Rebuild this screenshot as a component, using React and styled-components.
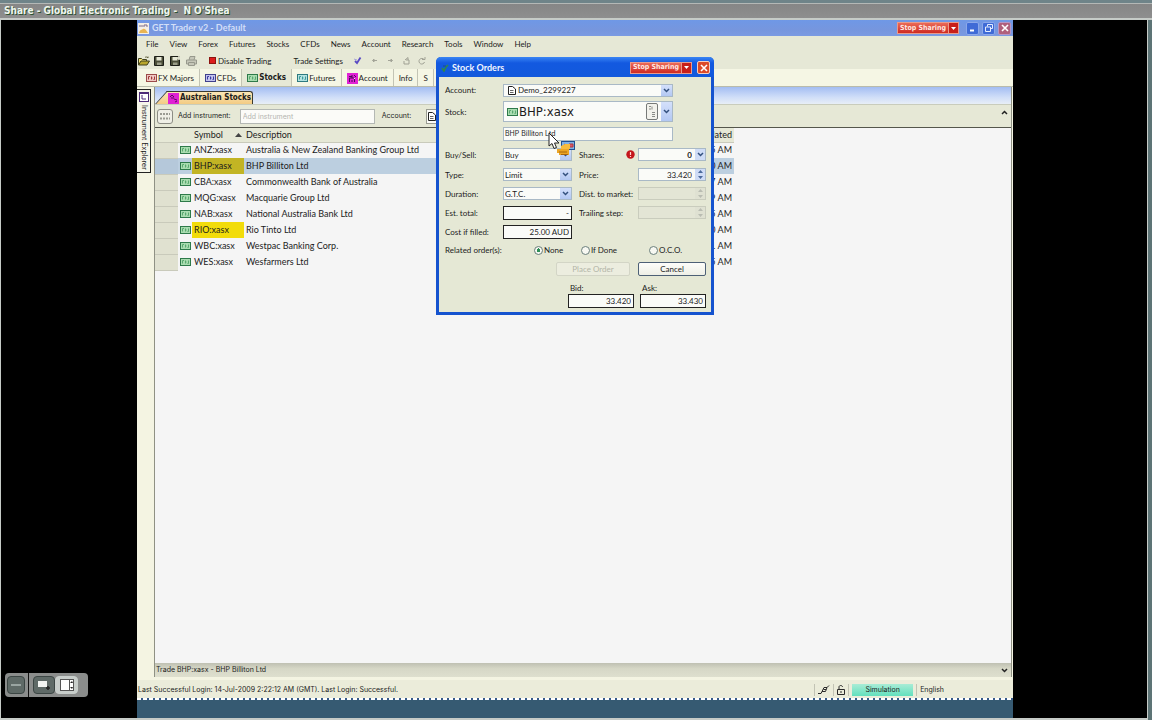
import React from 'react';
import styled, { createGlobalStyle, css } from 'styled-components';

const ui = '"Lato", "Liberation Sans", sans-serif';
const small = '"Inter", "Liberation Sans", sans-serif';
const strong = '"DejaVu Sans Condensed", "Liberation Sans", sans-serif';

const Global = createGlobalStyle`
  *, *::before, *::after { box-sizing: border-box; }
  body { margin: 0; background: #000; color: #1c1c1c; font: 8px/10px ${ui}; }
  button, input, select { font: inherit; color: inherit; margin: 0; padding: 0; border: 0; background: none; border-radius: 0; min-width: 0; }
  select { appearance: none; }
  svg { display: block; flex: none; }
`;

/* ---------- meeting frame ---------- */
const Frame = styled.div`
  position: relative;
  min-height: 100vh;
  display: flex;
  flex-direction: column;
  background: #5d7476;
`;
const FrameTitle = styled.header`
  height: 20px;
  padding-left: 4px;
  border-top: 3px solid #6f8489;
  border-bottom: 2px solid #c6cbc7;
  background: linear-gradient(#b4b8b6 0 1px, #868686 1px, #8e8e8e);
  color: #eef6ee;
  font: bold 10px/15px ${strong};
  text-shadow: 1px 1px 0 #2c5233;
  white-space: pre;
`;
const Stage = styled.div`
  flex: 1;
  display: grid;
  grid-template-columns: 136px minmax(0, 1fr) 134px;
  margin-right: 4px;
  border: solid #c6cbc7;
  border-width: 0 1px 2px 1px;
  background: #000;
`;
const Desktop = styled.div`
  grid-column: 2;
  position: relative;
  display: flex;
  flex-direction: column;
  background: #365a72;
`;
const Taskbar = styled.div`
  height: 20px;
  background:
    repeating-linear-gradient(90deg, #fff 0 4px, #365a8a 4px 6px) top / 100% 2px no-repeat,
    #365a72;
`;
const FloatBar = styled.div`
  position: absolute;
  left: 5px;
  bottom: 23px;
  height: 24px;
  width: 83px;
  display: flex;
  border-radius: 4px;
  background: #8b8d8c;
`;
const FloatButton = styled.button`
  display: grid;
  place-items: center;
  width: ${p => p.$w}px;
  margin: 3px ${p => p.$gap || 0}px 3px ${p => p.$lead || 0}px;
  border: 1px solid ${p => (p.$on ? '#c8cecb' : '#3c4644')};
  border-radius: 4px;
  background: ${p => (p.$on ? '#c8cecb' : '#5f6a67')};
`;
const FloatRule = styled.i`
  width: 1px;
  background: #111;
`;

/* ---------- application window ---------- */
const Window = styled.section`
  flex: 1;
  display: flex;
  flex-direction: column;
  background: #f4f4e2;
`;
const TitleBar = styled.header`
  height: 16px;
  display: flex;
  align-items: center;
  gap: 3px;
  padding: 0 2px 0 1px;
  background: linear-gradient(#6f98e6, #7696de 60%, #7b9ae2);
  color: #d3dff8;
  font: bold 9px/12px ${ui};
`;
const Grow = styled.span`
  flex: 1;
`;
const StopGroup = styled.div`
  display: flex;
  height: 12px;
  margin-right: ${p => p.$after}px;
  border: 1px solid #e89a8c;
  background: linear-gradient(#ea6a58, #cf2a22);
`;
const StopButton = styled.button`
  padding: 0 2px;
  color: #ffe9e2;
  font: bold 7px/9px ${strong};
`;
const StopMenu = styled.button`
  width: 10px;
  display: grid;
  place-items: center;
  border-left: 1px solid #e89a8c;
  background: #c81f1a;
`;
const WinButton = styled.button`
  width: 13px;
  height: 13px;
  display: grid;
  place-items: center;
  border-radius: 2px;
  border: 1px solid ${p => p.$edge || '#8ba8ea'};
  background: ${p => p.$fill || '#3f6bd6'};
`;
const MenuBar = styled.nav`
  height: 16px;
  display: flex;
  align-items: center;
  gap: 11px;
  padding-left: 9px;
  background: #e6e8d6;
`;
const MenuItem = styled.button`
  height: 12px;
`;
const ToolBar = styled.div`
  height: 17px;
  display: flex;
  align-items: center;
  padding-left: 1px;
  background: #e6e8d6;
`;
const ToolButton = styled.button`
  display: flex;
  align-items: center;
  gap: 2px;
  margin-right: ${p => p.$after}px;
`;
const TabBar = styled.nav`
  height: 18px;
  display: flex;
  padding-left: 4px;
  border-bottom: 1px solid #b9bbab;
  background: #f5f6e4;
`;
const Tab = styled.button`
  display: flex;
  align-items: center;
  gap: 1px;
  padding: 1px 5px 0;
  border-right: 1px solid #c3c4b4;
  white-space: nowrap;
  ${p => p.$active && css`
    background: #e6e8d6;
    font: bold 8px/10px ${strong};
  `}
`;
const Work = styled.div`
  flex: 1;
  display: flex;
  padding-right: 1px;
`;
const Rail = styled.aside`
  width: 17px;
  padding-top: 2px;
`;
const RailTab = styled.button`
  width: 14px;
  height: 84px;
  display: flex;
  flex-direction: column;
  align-items: center;
  gap: 3px;
  padding-top: 2px;
  border: 1px solid #222;
  border-left: 0;
  background: #f6f6ea;
`;
const RailText = styled.span`
  writing-mode: vertical-rl;
  white-space: nowrap;
  font: 7px/10px ${small};
`;
const Panel = styled.main`
  flex: 1;
  min-width: 0;
  display: flex;
  flex-direction: column;
  margin-bottom: 3px;
  border: solid #8f9184;
  border-width: 0 1px;
  background: #f5f5f5;
`;
const PanelTabs = styled.div`
  height: 18px;
  display: flex;
  align-items: flex-end;
  padding-left: 13px;
  border-bottom: 1px solid #c9ccbc;
  background: linear-gradient(#a3bdf2, #d0def8 60%, #e8eef6);
`;
const PanelTab = styled.button`
  position: relative;
  z-index: 0;
  height: 13px;
  display: flex;
  align-items: center;
  gap: 1px;
  padding-right: 1px;
  border: solid #3a3a30;
  border-width: 1px 1px 0 0;
  border-radius: 0 3px 0 0;
  background: linear-gradient(#fbe6b6, #f3cb84);
  font: bold 8px/10px ${strong};
  &::before {
    content: '';
    position: absolute;
    z-index: -1;
    left: -7px;
    top: -1px;
    width: 14px;
    height: 13px;
    border: solid #3a3a30;
    border-width: 1px 0 0 1px;
    background: linear-gradient(#fbe6b6, #f3cb84);
    transform: skewX(-42deg);
  }
`;
const Filter = styled.div`
  height: 23px;
  display: flex;
  align-items: center;
  padding: 0 3px 0 2px;
  border-bottom: 1px solid #55564c;
  background: #e6e8d6;
  font: 7px/10px ${small};
`;
const GridButton = styled.button`
  width: 16px;
  height: 15px;
  margin-right: 5px;
  display: grid;
  place-items: center;
  border: 1px solid #8c8d84;
  border-radius: 3px;
  background: #efefe6;
`;
const FilterInput = styled.input`
  width: 135px;
  height: 15px;
  margin: 0 7px 0 9px;
  padding: 0 2px;
  border: 1px solid #b4b8b4;
  background: #fbfbf8;
  &::placeholder { color: #b4b5b0; opacity: 1; }
`;
const FilterSelect = styled.div`
  width: 120px;
  height: 15px;
  margin-left: 15px;
  padding-left: 1px;
  display: flex;
  align-items: center;
  border: 1px solid #9a9c92;
  background: #fbfbf8;
`;
const FlatButton = styled.button`
  display: grid;
  place-items: center;
  height: 14px;
  align-self: flex-start;
`;

const Sheet = styled.table`
  width: 579px;
  table-layout: fixed;
  border-collapse: collapse;
  font: 9px/12px ${ui};
`;
const HeadCell = styled.th`
  width: ${p => p.$w}px;
  height: 14px;
  padding: 1px 2px 0;
  border-bottom: 1px solid #c9cabb;
  background: #e6e8d6;
  font-weight: normal;
  text-align: ${p => p.$align || 'left'};
  white-space: nowrap;
`;
const SortLabel = styled.span`
  display: flex;
  align-items: center;
  justify-content: space-between;
`;
const Row = styled.tr`
  height: 16px;
  background: ${p => (p.$selected ? '#bccfe0' : 'transparent')};
`;
const Handle = styled.td`
  padding: 0;
  border-bottom: 1px solid #c9cabb;
  background: ${p => (p.$selected ? '#b5c8da' : '#e0e1d0')};
`;
const Cell = styled.td`
  padding: 0 2px;
  background: ${p => p.$fill || 'transparent'};
  text-align: ${p => p.$align || 'left'};
  white-space: nowrap;
`;
const InfoBar = styled.div`
  height: 14px;
  display: flex;
  align-items: center;
  justify-content: space-between;
  margin-top: auto;
  padding: 0 3px 0 1px;
  background: linear-gradient(#bfc0b2, #d6d7c6 40%, #dedfce);
  font: 7px/10px ${small};
`;
const StatusBar = styled.footer`
  height: 18px;
  display: flex;
  align-items: center;
  padding: 1px 66px 0 1px;
  background: #ebecda;
  font: 7px/10px ${small};
`;
const StatusCell = styled.span`
  height: 12px;
  display: flex;
  align-items: center;
  padding: 0 3px;
  border-left: 1px solid #c2c3b4;
`;
const Mode = styled.span`
  width: 61px;
  padding: 1px 0;
  text-align: center;
  background: linear-gradient(#a9ecd6, #62e0bd);
`;

/* ---------- order dialog ---------- */
const Dialog = styled.form`
  position: absolute;
  left: 299px;
  top: 37px;
  width: 278px;
  border: 3px solid #1553cf;
  border-top: 0;
  border-radius: 5px 5px 0 0;
  background: #e5e8d5;
`;
const DialogTitle = styled.header`
  height: 20px;
  display: flex;
  align-items: center;
  gap: 3px;
  margin: 0 -3px;
  padding: 1px 4px 0 5px;
  border-radius: 5px 5px 0 0;
  background: linear-gradient(#3a86f4, #1359e0 30%, #1259dc);
  color: #f2f6ff;
  font: bold 9px/12px ${ui};
`;
const DialogBody = styled.div`
  display: flex;
  flex-direction: column;
  padding: 3px 5px 4px 6px;
`;
const FormRow = styled.div`
  display: grid;
  grid-template-columns: 58px 76px 59px 68px;
  align-items: center;
  height: ${p => p.$h || 19}px;
`;
const Label = styled.label`
  display: flex;
  align-items: center;
  justify-content: space-between;
  padding-right: 3px;
  white-space: nowrap;
`;
const Box = styled.div`
  width: ${p => p.$w || 69}px;
  height: ${p => p.$h || 13}px;
  display: flex;
  align-items: center;
  gap: 1px;
  padding-left: ${p => p.$pad || 0}px;
  border: 1px solid ${p => p.$edge || '#a9b9c6'};
  background: ${p => p.$fill || '#fafbf8'};
`;
const Text = styled.input`
  flex: 1;
  align-self: stretch;
  width: 100%;
  padding: 0 2px 0 1px;
  text-align: ${p => p.$align || 'left'};
  ${p => p.$bold && css`font-weight: bold;`}
  ${p => p.$compact && css`font: 7px/10px ${small};`}
  ${p => p.$big && css`font: 13px/18px ${strong}; padding-left: 0;`}
`;
const Choice = styled.select`
  flex: 1;
  align-self: stretch;
  width: 100%;
  padding-left: 1px;
`;
const Drop = styled.span`
  align-self: stretch;
  width: 11px;
  display: grid;
  place-items: center;
  background: linear-gradient(#d4e0fb, #b3c8f3);
  pointer-events: none;
`;
const Spin = styled.span`
  align-self: stretch;
  width: 10px;
  display: grid;
  place-items: center;
  background: ${p => (p.$off ? '#dfe1d2' : '#cfdcf6')};
`;
const SideButton = styled.button`
  width: 12px;
  height: 17px;
  display: grid;
  place-items: center;
  margin-right: 2px;
  border: 1px solid #777a78;
  border-radius: 2px;
  background: #f2f2ec;
`;
const Radios = styled.div`
  display: grid;
  grid-template-columns: 89px 47px 68px 1fr;
  align-items: center;
  height: 18px;
`;
const RadioLabel = styled.label`
  display: flex;
  align-items: center;
  gap: 1px;
  white-space: nowrap;
`;
const Radio = styled.input`
  appearance: none;
  width: 9px;
  height: 9px;
  flex: none;
  border: 1px solid #6b7f7c;
  border-radius: 50%;
  background: #f7f8f2;
  &:checked { background: radial-gradient(circle, #2f8f57 0 2px, #f7f8f2 2px); }
`;
const Actions = styled.div`
  display: flex;
  justify-content: flex-end;
  align-items: center;
  gap: 8px;
  height: 19px;
`;
const Action = styled.button`
  width: ${p => p.$w}px;
  height: 14px;
  border: 1px solid #4d6076;
  border-radius: 2px;
  background: linear-gradient(#fdfdfa, #eeefe6);
  &:disabled { border-color: #d3d5c6; background: #eceddf; color: #b3b5a8; }
`;
const Quotes = styled.div`
  display: flex;
  justify-content: flex-end;
  gap: 6px;
  padding-top: 5px;
`;
const Quote = styled.label`
  display: flex;
  flex-direction: column;
  gap: 1px;
`;
const QuoteName = styled.span`
  padding-left: 2px;
`;
const Pointer = styled.div`
  position: absolute;
  left: 108px;
  top: 75px;
  pointer-events: none;
`;

/* ---------- drawings ---------- */
const Chevron = ({ up, color = '#33507e' }) => (
  <svg width="7" height="5" viewBox="0 0 7 5" fill="none" stroke={color} strokeWidth="1.5">
    <path d={up ? 'M1 4L3.500 1.500L6 4' : 'M1 1L3.500 3.500L6 1'} />
  </svg>
);
const Caret = ({ color = '#fff' }) => (
  <svg width="5" height="3" viewBox="0 0 5 3" fill={color}><path d="M0 0h5L2.500 3z" /></svg>
);
const SpinMarks = ({ color = '#4c6a9c' }) => (
  <svg width="5" height="9" viewBox="0 0 5 9" fill={color}><path d="M0 3L2.500 0L5 3zM0 6h5L2.500 9z" /></svg>
);
const Note = ({ line = '#2e7a4a', fill = '#a9dcb0', mark = '#5aa870' }) => (
  <svg width="11" height="8" viewBox="0 0 11 8">
    <rect x=".5" y=".5" width="10" height="7" fill={fill} stroke={line} />
    <path d="M2.500 2.500v3M2.500 2.500h1.500M5.500 2.500v3M5.500 4h1M8.500 2.500v3M7.500 5.500h1" stroke={mark} fill="none" />
  </svg>
);
const Doc = () => (
  <svg width="8" height="9" viewBox="0 0 8 9" fill="#fff" stroke="#222">
    <path d="M.5.5h4l3 2.500v5.500h-7z" /><path d="M2 4.500h3.500M2 6.500h3.500" strokeWidth=".7" />
  </svg>
);
const Magenta = () => (
  <svg width="11" height="11" viewBox="0 0 11 11">
    <rect width="11" height="11" fill="#e021d4" />
    <path d="M2 4l2-2 2 2M3 5h3M6 6l3 1M7 9l2-1" stroke="#5c1060" fill="none" />
  </svg>
);
const Cart = () => (
  <svg width="11" height="11" viewBox="0 0 11 11">
    <rect width="11" height="11" fill="#e021d4" />
    <path d="M2.500 9V5h5v4M5 2v3M2 3.500h3M7 2l2 2M5 9V7" stroke="#4a0c58" fill="none" /><path d="M7 5h1v1h-1z" fill="#ffd9f8" />
  </svg>
);
const AppMark = () => (
  <svg width="11" height="11" viewBox="0 0 11 11">
    <rect width="11" height="11" fill="#f3efe6" /><path d="M1 3h6M6 2h3v2" stroke="#7a6a8c" fill="none" />
    <path d="M1 10c1-4 3-3 4-4s3 0 5 4z" fill="#e9b552" />
  </svg>
);
const Folder = () => (
  <svg width="12" height="10" viewBox="0 0 12 10">
    <path d="M.5 9V2.500h3l1 1h4V5" fill="#f4e27a" stroke="#40401c" /><path d="M.5 9L3 5h8.500L9 9z" fill="#b9a62c" stroke="#40401c" />
    <path d="M7 1.500c1-1 2-.5 3 .5V.5" fill="none" stroke="#40401c" strokeWidth=".8" />
  </svg>
);
const Floppy = ({ star }) => (
  <svg width="11" height="10" viewBox="0 0 11 10">
    <path d="M.5.5h9v9h-9z" fill="#4a4d38" stroke="#1c1e18" /><path d="M2.500 1h5v3.500h-5z" fill="#e6e8d6" /><path d="M3 6.500h4.500V9H3z" fill="#9a9d88" />
    {star && <path d="M7 2h4M9 0v4" stroke="#e6e8d6" strokeWidth="1.500" />}
  </svg>
);
const Printer = () => (
  <svg width="11" height="10" viewBox="0 0 11 10" fill="#c5c6b8" stroke="#97988c">
    <path d="M3 4L4 .5h5L8 4" /><path d="M.5 4h10v4h-10z" /><path d="M2.500 6.500h6v3h-6z" />
  </svg>
);
const RedStop = () => <svg width="7" height="7"><rect width="7" height="7" fill="#8c1410" /><rect x="1" y="1" width="5" height="5" fill="#dc1c1c" /></svg>;
const Tick = () => (
  <svg width="9" height="9" viewBox="0 0 9 9" fill="none"><path d="M2 5l2 2L7.500 1.500" stroke="#5a4bc4" strokeWidth="1.800" /><path d="M1 3l3 1" stroke="#a8a4d8" /></svg>
);
const Arrow = ({ right }) => (
  <svg width="7" height="7" viewBox="0 0 7 7" fill="#a3a498" stroke="#a3a498">
    <path d={right ? 'M1 3.500h4M4 2L5.500 3.500 4 5z' : 'M6 3.500H2M3 2L1.500 3.500 3 5z'} />
  </svg>
);
const Refresh = ({ home }) => (
  <svg width="8" height="8" viewBox="0 0 8 8" fill="none" stroke="#a0a194">
    <path d={home ? 'M1 4v3h5V3H3M2 3L5 .5V3' : 'M6 2.500A2.800 2.800 0 1 0 6.500 5M4 2.500h3V0'} />
  </svg>
);
const RailIcon = () => (
  <svg width="10" height="10" viewBox="0 0 10 10"><rect x=".5" y=".5" width="9" height="9" fill="#fff" stroke="#4d2a78" /><path d="M0 1h10" stroke="#4d2a78" strokeWidth="2" /><path d="M3 3v4h4" stroke="#4d2a78" fill="none" /></svg>
);
const GridMark = () => (
  <svg width="10" height="9" viewBox="0 0 10 9" stroke="#9a9b92" strokeWidth="2" strokeDasharray="2 1"><path d="M0 2h10M0 6.500h10" /></svg>
);
const Cross = () => <svg width="8" height="8" viewBox="0 0 8 8" stroke="#fff" strokeWidth="1.600"><path d="M1 1l6 6M7 1L1 7" /></svg>;
const MinMark = () => <svg width="8" height="8" viewBox="0 0 8 8"><path d="M1 6.500h4" stroke="#fff" strokeWidth="2" /></svg>;
const RestoreMark = () => (
  <svg width="8" height="8" viewBox="0 0 8 8" fill="none" stroke="#e4ecff"><path d="M2.500 2.500v-2h5v4h-2" /><path d="M.5 3h5v4.500h-5z" /></svg>
);
const Plug = () => (
  <svg width="12" height="9" viewBox="0 0 12 9" fill="none" stroke="#2a2a2a"><path d="M0 8.500h3l1-2M4 6.500L6 2.500h3L7.500 6.500zM9 2.500l2-2M5.500 4.500h2.500" /></svg>
);
const Lock = () => (
  <svg width="8" height="10" viewBox="0 0 8 10" fill="none" stroke="#2a2a2a"><path d="M.5 4.500h7v5h-7z" /><path d="M2 4.500V2C2 0 5.500 0 5.500 2M4 6v2" /></svg>
);
const Alert = () => (
  <svg width="9" height="9" viewBox="0 0 9 9"><circle cx="4.500" cy="4.500" r="4.200" fill="#c4161c" /><path d="M4.500 2v3M4.500 6v1" stroke="#ffd9d2" strokeWidth="1.200" /></svg>
);
const DialogMark = () => (
  <svg width="8" height="8" viewBox="0 0 8 8" fill="none"><path d="M1 4l2 3 2-4 2-2" stroke="#2f8a4a" strokeWidth="1.600" /><path d="M2 2h3" stroke="#1d4c8c" /></svg>
);
const SideMark = () => (
  <svg width="6" height="13" viewBox="0 0 6 13" fill="none" stroke="#8a8c88"><path d="M0 1.500h2M0 4h2M3 1.500v3M3 7.500h3M3 9.500h3M3 11.500h3" /></svg>
);
const PointerArt = () => (
  <svg width="30" height="28" viewBox="0 0 30 28">
    <rect x="14.500" y="9.500" width="13" height="8" fill="#7fb2e6" stroke="#1f4f90" />
    <path d="M17 12l3 2M22 12h4v3h-4z" stroke="#b03a3a" fill="#d9576a" />
    <path d="M14 14l4-2h5v5h-4l-5 1z" fill="#f6bb3c" /><path d="M10 17h12v4H10zM12 20h10v3H12z" fill="#eba524" /><path d="M12 20h8M14 22.500h7" stroke="#a8660c" />
    <path d="M2 1v13l3-2.500 2 5 2.500-1-2-4.500H12z" fill="#fff" stroke="#222" />
  </svg>
);

/* ---------- data ---------- */
const menus = ['File', 'View', 'Forex', 'Futures', 'Stocks', 'CFDs', 'News', 'Account', 'Research', 'Tools', 'Window', 'Help'];
const rows = [
  ['ANZ:xasx', 'Australia & New Zealand Banking Group Ltd', '5 AM'],
  ['BHP:xasx', 'BHP Billiton Ltd', '0 AM', '#c2b424', true],
  ['CBA:xasx', 'Commonwealth Bank of Australia', '7 AM'],
  ['MQG:xasx', 'Macquarie Group Ltd', '9 AM'],
  ['NAB:xasx', 'National Australia Bank Ltd', '5 AM'],
  ['RIO:xasx', 'Rio Tinto Ltd', '0 AM', '#f2dc0a'],
  ['WBC:xasx', 'Westpac Banking Corp.', '1 AM'],
  ['WES:xasx', 'Wesfarmers Ltd', '5 AM'],
];

const StopSharing = ({ after }) => (
  <StopGroup $after={after}>
    <StopButton type="button">Stop Sharing</StopButton>
    <StopMenu type="button" aria-label="Sharing options"><Caret /></StopMenu>
  </StopGroup>
);

const Select = ({ id, value }) => (
  <Box>
    <Choice id={id} defaultValue={value}><option>{value}</option></Choice>
    <Drop><Chevron /></Drop>
  </Box>
);

const off = { $edge: '#c9ccbd', $fill: '#e3e5d5' };

function OrderDialog() {
  return (
    <Dialog onSubmit={e => e.preventDefault()}>
      <DialogTitle>
        <DialogMark />
        Stock Orders
        <Grow />
        <StopSharing after={2} />
        <WinButton type="button" aria-label="Close" $fill="#dc4a28" $edge="#f6cdbd"><Cross /></WinButton>
      </DialogTitle>
      <DialogBody>
        <FormRow $h={20}>
          <Label htmlFor="account">Account:</Label>
          <Box $w={170} $pad={4}>
            <Doc />
            <Choice id="account" defaultValue="Demo_2299227"><option>Demo_2299227</option></Choice>
            <Drop><Chevron /></Drop>
          </Box>
        </FormRow>
        <FormRow $h={23}>
          <Label htmlFor="stock">Stock:</Label>
          <Box $w={170} $h={21} $pad={3}>
            <Note />
            <Text id="stock" $big defaultValue="BHP:xasx" />
            <SideButton type="button" aria-label="Find instrument"><SideMark /></SideButton>
            <Drop><Chevron /></Drop>
          </Box>
        </FormRow>
        <FormRow $h={21}>
          <span />
          <Box $w={170} $h={14}><Text aria-label="Stock name" $compact readOnly value="BHP Billiton Ltd" /></Box>
        </FormRow>
        <FormRow $h={21}>
          <Label htmlFor="side">Buy/Sell:</Label>
          <Select id="side" value="Buy" />
          <Label htmlFor="shares">Shares:<Alert /></Label>
          <Box $w={68}><Text id="shares" $align="right" $bold defaultValue="0" /><Spin><Chevron /></Spin></Box>
        </FormRow>
        <FormRow>
          <Label htmlFor="type">Type:</Label>
          <Select id="type" value="Limit" />
          <Label htmlFor="price">Price:</Label>
          <Box $w={68}><Text id="price" $align="right" defaultValue="33.420" /><Spin><SpinMarks /></Spin></Box>
        </FormRow>
        <FormRow>
          <Label htmlFor="duration">Duration:</Label>
          <Select id="duration" value="G.T.C." />
          <Label htmlFor="distance">Dist. to market:</Label>
          <Box $w={68} {...off}><Text id="distance" disabled /><Spin $off><SpinMarks color="#b9bcb2" /></Spin></Box>
        </FormRow>
        <FormRow>
          <Label htmlFor="total">Est. total:</Label>
          <Box $h={14} $edge="#222"><Text id="total" $align="right" readOnly value="-" /></Box>
          <Label htmlFor="trailing">Trailing step:</Label>
          <Box $w={68} {...off}><Text id="trailing" disabled /><Spin $off><SpinMarks color="#b9bcb2" /></Spin></Box>
        </FormRow>
        <FormRow>
          <Label htmlFor="cost">Cost if filled:</Label>
          <Box $h={14} $edge="#222"><Text id="cost" $align="right" readOnly value="25.00 AUD" /></Box>
        </FormRow>
        <Radios role="radiogroup" aria-label="Related orders">
          <span>Related order(s):</span>
          <RadioLabel><Radio type="radio" name="related" defaultChecked />None</RadioLabel>
          <RadioLabel><Radio type="radio" name="related" />If Done</RadioLabel>
          <RadioLabel><Radio type="radio" name="related" />O.C.O.</RadioLabel>
        </Radios>
        <Actions>
          <Action type="submit" $w={74} disabled>Place Order</Action>
          <Action type="button" $w={68}>Cancel</Action>
        </Actions>
        <Quotes>
          <Quote><QuoteName>Bid:</QuoteName><Box $w={66} $h={14} $edge="#222"><Text $align="right" readOnly value="33.420" /></Box></Quote>
          <Quote><QuoteName>Ask:</QuoteName><Box $w={66} $h={14} $edge="#222"><Text $align="right" readOnly value="33.430" /></Box></Quote>
        </Quotes>
      </DialogBody>
      <Pointer><PointerArt /></Pointer>
    </Dialog>
  );
}

export default function App() {
  return (
    <>
      <Global />
      <Frame>
        <FrameTitle>{"Share - Global Electronic Trading -  N O'Shea"}</FrameTitle>
        <Stage>
          <Desktop>
            <Window>
              <TitleBar>
                <AppMark />
                GET Trader v2 - Default
                <Grow />
                <StopSharing after={4} />
                <WinButton type="button" aria-label="Minimize"><MinMark /></WinButton>
                <WinButton type="button" aria-label="Restore"><RestoreMark /></WinButton>
                <WinButton type="button" aria-label="Close" $fill="#b0607c" $edge="#b795c4"><Cross /></WinButton>
              </TitleBar>
              <MenuBar>{menus.map(m => <MenuItem key={m} type="button">{m}</MenuItem>)}</MenuBar>
              <ToolBar>
                <ToolButton type="button" aria-label="Open" $after={4}><Folder /></ToolButton>
                <ToolButton type="button" aria-label="Save" $after={5}><Floppy /></ToolButton>
                <ToolButton type="button" aria-label="Save as" $after={5}><Floppy star /></ToolButton>
                <ToolButton type="button" aria-label="Print" $after={12}><Printer /></ToolButton>
                <ToolButton type="button" $after={22}><RedStop />Disable Trading</ToolButton>
                <ToolButton type="button" $after={10}>Trade Settings</ToolButton>
                <ToolButton type="button" aria-label="Confirm" $after={9}><Tick /></ToolButton>
                <ToolButton type="button" aria-label="Back" $after={9}><Arrow /></ToolButton>
                <ToolButton type="button" aria-label="Forward" $after={9}><Arrow right /></ToolButton>
                <ToolButton type="button" aria-label="Home" $after={7}><Refresh home /></ToolButton>
                <ToolButton type="button" aria-label="Refresh"><Refresh /></ToolButton>
              </ToolBar>
              <TabBar>
                <Tab type="button"><Note line="#9c4a4a" fill="#efc9c4" mark="#a03a3a" />FX Majors</Tab>
                <Tab type="button"><Note line="#40408c" fill="#c4c4ee" mark="#3a3aa0" />CFDs</Tab>
                <Tab type="button" $active><Note />Stocks</Tab>
                <Tab type="button"><Note line="#2e7a80" fill="#b4e2e0" mark="#3d9a9a" />Futures</Tab>
                <Tab type="button"><Cart />Account</Tab>
                <Tab type="button">Info</Tab>
                <Tab type="button">S</Tab>
              </TabBar>
              <Work>
                <Rail>
                  <RailTab type="button"><RailIcon /><RailText>Instrument Explorer</RailText></RailTab>
                </Rail>
                <Panel>
                  <PanelTabs><PanelTab type="button"><Magenta />Australian Stocks</PanelTab></PanelTabs>
                  <Filter>
                    <GridButton type="button" aria-label="Layout"><GridMark /></GridButton>
                    <label htmlFor="add">Add instrument:</label>
                    <FilterInput id="add" placeholder="Add instrument" />
                    <span>Account:</span>
                    <FilterSelect><Doc /></FilterSelect>
                    <Grow />
                    <FlatButton type="button" aria-label="Collapse"><Chevron up color="#222" /></FlatButton>
                  </Filter>
                  <Sheet>
                    <thead>
                      <tr>
                        <HeadCell $w={23} />
                        <HeadCell $w={14} />
                        <HeadCell $w={52}><SortLabel>Symbol<svg width="7" height="4" viewBox="0 0 7 4"><path d="M0 4L3.500 0L7 4z" fill="#444" /></svg></SortLabel></HeadCell>
                        <HeadCell>Description</HeadCell>
                        <HeadCell $w={60} $align="right">Updated</HeadCell>
                      </tr>
                    </thead>
                    <tbody>
                      {rows.map(([symbol, name, time, fill, selected]) => (
                        <Row key={symbol} $selected={selected}>
                          <Handle $selected={selected} />
                          <Cell><Note /></Cell>
                          <Cell $fill={fill}>{symbol}</Cell>
                          <Cell>{name}</Cell>
                          <Cell $align="right">{time}</Cell>
                        </Row>
                      ))}
                    </tbody>
                  </Sheet>
                  <InfoBar>
                    Trade BHP:xasx - BHP Billiton Ltd
                    <FlatButton type="button" aria-label="Expand"><Chevron color="#222" /></FlatButton>
                  </InfoBar>
                </Panel>
              </Work>
              <StatusBar>
                Last Successful Login: 14-Jul-2009 2:22:12 AM (GMT). Last Login: Successful.
                <Grow />
                <StatusCell><Plug /></StatusCell>
                <StatusCell><Lock /></StatusCell>
                <StatusCell><Mode>Simulation</Mode></StatusCell>
                <StatusCell>English</StatusCell>
              </StatusBar>
            </Window>
            <Taskbar />
            <OrderDialog />
          </Desktop>
        </Stage>
        <FloatBar>
          <FloatButton type="button" aria-label="Minimize controls" $w={18} $lead={2} $gap={3}>
            <svg width="10" height="2"><rect width="10" height="2" fill="#9aa5a2" /></svg>
          </FloatButton>
          <FloatRule />
          <FloatButton type="button" aria-label="Scaled view" $w={22} $lead={4}>
            <svg width="14" height="12" viewBox="0 0 14 12"><rect x="1" y="2" width="9" height="6" fill="#f2f4f2" /><path d="M9 9h4M11 7v4" stroke="#222" strokeWidth="1.500" /></svg>
          </FloatButton>
          <FloatButton type="button" aria-label="Full view" $w={23} $on>
            <svg width="14" height="12" viewBox="0 0 14 12"><rect x=".5" y=".5" width="13" height="11" fill="#fff" stroke="#555" /><path d="M9.500 0v12" stroke="#555" /><path d="M10 4l2-2 1 2zM10 8l2 2 1-2z" fill="#222" /></svg>
          </FloatButton>
        </FloatBar>
      </Frame>
    </>
  );
}
